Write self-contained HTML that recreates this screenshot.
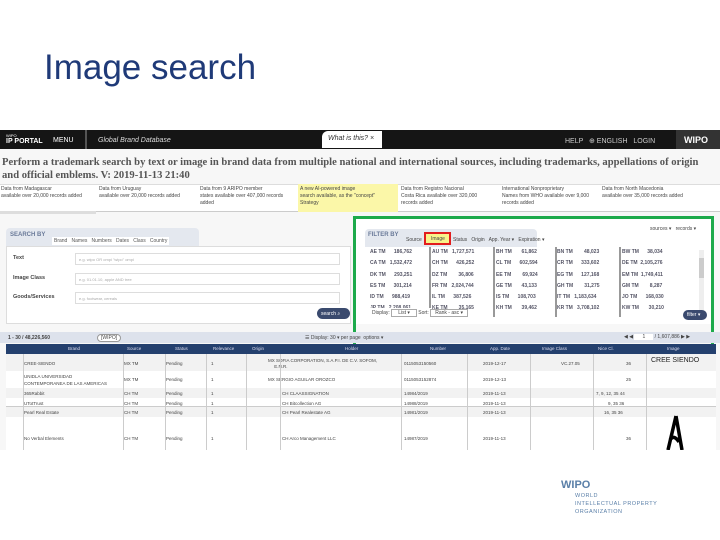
<!DOCTYPE html><html><head><style>
*{margin:0;padding:0;box-sizing:border-box}
body{width:720px;height:540px;background:#fff;position:relative;overflow:hidden;font-family:"Liberation Sans",sans-serif}
.a{position:absolute}
.t{font-size:5px;color:#444;white-space:nowrap}
</style></head><body>
<div class="a" style="left:44px;top:48px;font-size:35px;color:#1f3a78">Image search</div>

<!-- top bar -->
<div class="a" style="left:0;top:130px;width:720px;height:19px;background:#151515"></div>
<div class="a t" style="left:6px;top:133px;color:#fff;font-size:4px">WIPO</div>
<div class="a t" style="left:6px;top:138px;color:#fff;font-size:7px;font-weight:bold">IP PORTAL</div>
<div class="a t" style="left:53px;top:137px;color:#fff;font-size:7px">MENU</div>
<div class="a" style="left:85px;top:130px;width:2px;height:19px;background:#555"></div>
<div class="a t" style="left:98px;top:137px;color:#ddd;font-size:7px;font-style:italic">Global Brand Database</div>
<div class="a" style="left:322px;top:131px;width:60px;height:17px;background:#fff;border-radius:6px 0 0 0"></div>
<div class="a t" style="left:328px;top:135px;color:#333;font-size:7px;font-style:italic">What is this? ×</div>
<div class="a t" style="left:565px;top:137px;color:#ccc;font-size:7px">HELP &nbsp; ⊕ ENGLISH &nbsp; LOGIN</div>
<div class="a" style="left:676px;top:130px;width:44px;height:19px;background:#333"></div>
<div class="a t" style="left:684px;top:135px;color:#fff;font-size:9px;font-weight:bold">WIPO</div>

<div class="a" style="left:0;top:149px;width:720px;height:301px;background:#f7f7f7"></div>
<div class="a" style="left:2px;top:156px;font-family:'Liberation Serif',serif;font-size:10.6px;font-weight:bold;color:#555;line-height:13px;width:700px">Perform a trademark search by text or image in brand data from multiple national and international sources, including trademarks, appellations of origin and official emblems. V: 2019-11-13 21:40</div>

<!-- notices -->
<div class="a" style="left:0;top:184px;width:720px;height:28px;background:#fff;border-top:1px solid #ddd;border-bottom:1px solid #ccc"></div>
<div class="a" style="left:298px;top:184px;width:100px;height:28px;background:#fbf7a8"></div>
<div class="a t" style="left:1px;top:186px;line-height:7px">Data from Madagascar<br>available over 20,000 records added</div>
<div class="a t" style="left:99px;top:186px;line-height:7px">Data from Uruguay<br>available over 20,000 records added</div>
<div class="a t" style="left:200px;top:186px;line-height:7px">Data from 9 ARIPO member<br>states available over 407,000 records<br>added</div>
<div class="a t" style="left:300px;top:186px;line-height:7px">A new AI-powered image<br>search available, as the "concept"<br>Strategy</div>
<div class="a t" style="left:401px;top:186px;line-height:7px">Data from Registro Nacional<br>Costa Rica available over 320,000<br>records added</div>
<div class="a t" style="left:502px;top:186px;line-height:7px">International Nonproprietary<br>Names from WHO available over 9,000<br>records added</div>
<div class="a t" style="left:602px;top:186px;line-height:7px">Data from North Macedonia<br>available over 35,000 records added</div>
<div class="a" style="left:0;top:211px;width:96px;height:3px;background:#ddd"></div>

<!-- search by -->
<div class="a" style="left:6px;top:228px;width:193px;height:20px;background:#e4e8ef;border-radius:4px 4px 0 0"></div>
<div class="a t" style="left:10px;top:232px;font-size:6px;font-weight:bold;color:#6a7a99">SEARCH BY</div>
<div class="a t" style="left:52px;top:237px;font-size:5px;color:#555;background:#fff;padding:1px 2px">Brand&nbsp;&nbsp; Names&nbsp;&nbsp; Numbers&nbsp;&nbsp; Dates&nbsp;&nbsp; Class&nbsp;&nbsp; Country</div>
<div class="a" style="left:6px;top:246px;width:345px;height:78px;background:#fff;border:1px solid #ddd"></div>
<div class="a t" style="left:13px;top:255px;font-weight:bold;font-size:5.5px">Text</div>
<div class="a t" style="left:13px;top:275px;font-weight:bold;font-size:5.5px">Image Class</div>
<div class="a t" style="left:13px;top:294px;font-weight:bold;font-size:5.5px">Goods/Services</div>
<div class="a" style="left:75px;top:253px;width:265px;height:12px;border:1px solid #ddd;background:#fff"></div>
<div class="a" style="left:75px;top:273px;width:265px;height:12px;border:1px solid #ddd;background:#fff"></div>
<div class="a" style="left:75px;top:292px;width:265px;height:12px;border:1px solid #ddd;background:#fff"></div>
<div class="a t" style="left:79px;top:257px;color:#aaa;font-size:4px">e.g. wipo OR ompi "wipo" ompi</div>
<div class="a t" style="left:79px;top:277px;color:#aaa;font-size:4px">e.g. 01.01.10, apple AND tree</div>
<div class="a t" style="left:79px;top:296px;color:#aaa;font-size:4px">e.g. footwear, cereals</div>
<div class="a" style="left:317px;top:308px;width:33px;height:11px;background:#3a4a6e;border-radius:6px"></div>
<div class="a t" style="left:321px;top:311px;color:#fff">search ⌕</div>

<!-- filter by (green) -->
<div class="a" style="left:353px;top:216px;width:361px;height:191px;border:3px solid #1daa4b"></div>
<div class="a" style="left:356px;top:219px;width:355px;height:105px;background:#fff"></div>
<div class="a" style="left:365px;top:229px;width:172px;height:18px;background:#e4e8ef;border-radius:4px 4px 0 0"></div>
<div class="a t" style="left:368px;top:232px;font-size:6px;font-weight:bold;color:#6a7a99">FILTER BY</div>
<div class="a t" style="left:406px;top:237px">Source</div>
<div class="a" style="left:424px;top:232px;width:27px;height:13px;border:2px solid #e21d1d;background:#f8f38a"></div>
<div class="a t" style="left:431px;top:236px">Image</div>
<div class="a t" style="left:453px;top:237px">Status &nbsp; Origin &nbsp; App. Year ▾ &nbsp; Expiration ▾</div>
<div class="a t" style="left:650px;top:226px">sources ▾ &nbsp; records ▾</div>
<div class="a" style="left:370px;top:247px;width:330px;height:72px;font-size:5px;color:#556;line-height:11.3px;font-weight:bold;white-space:pre">
<div class="a" style="left:0;top:0;white-space:pre">AE TM      186,762
CA TM   1,532,472
DK TM      293,251
ES TM      301,214
ID TM      988,419
JP TM   2,208,061</div>
<div class="a" style="left:62px;top:0;white-space:pre">AU TM   1,727,571
CH TM      426,252
DZ TM        36,806
FR TM   2,024,744
IL TM      387,526
KE TM        35,165</div>
<div class="a" style="left:126px;top:0;white-space:pre">BH TM       61,862
CL TM      602,594
EE TM        69,924
GE TM       43,133
IS TM      108,703
KH TM       39,462</div>
<div class="a" style="left:187px;top:0;white-space:pre">BN TM        48,023
CR TM      333,602
EG TM      127,168
GH TM        31,275
IT TM   1,183,634
KR TM   3,708,102</div>
<div class="a" style="left:252px;top:0;white-space:pre">BW TM      38,034
DE TM  2,105,276
EM TM  1,749,411
GM TM        8,287
JO TM      168,030
KW TM       30,210</div>
</div>
<div class="a" style="left:429px;top:247px;width:2px;height:70px;background:#999"></div>
<div class="a" style="left:493px;top:247px;width:2px;height:70px;background:#999"></div>
<div class="a" style="left:555px;top:247px;width:2px;height:70px;background:#999"></div>
<div class="a" style="left:619px;top:247px;width:2px;height:70px;background:#999"></div>
<div class="a" style="left:699px;top:250px;width:5px;height:60px;background:#eee"></div>
<div class="a" style="left:699px;top:258px;width:5px;height:20px;background:#ccc"></div>
<div class="a" style="left:370px;top:308px;width:62px;height:11px;background:#fff"></div>
<div class="a t" style="left:372px;top:310px">Display: <span style="border:1px solid #aaa;padding:0 6px">List ▾</span> Sort: <span style="border:1px solid #aaa;padding:0 4px">Rank - asc ▾</span></div>
<div class="a" style="left:683px;top:310px;width:24px;height:10px;background:#3a4a6e;border-radius:5px"></div>
<div class="a t" style="left:687px;top:312px;color:#fff">filter ▾</div>

<!-- results -->
<div class="a" style="left:0;top:332px;width:720px;height:11px;background:#dde2ec"></div>
<div class="a t" style="left:8px;top:335px;font-weight:bold">1 - 30 / 48,226,560</div>
<div class="a t" style="left:97px;top:334px;border:1px solid #999;border-radius:4px;padding:0 3px;background:#fff">[WIPO]</div>
<div class="a t" style="left:305px;top:335px">☰ Display: 30 ▾ per page &nbsp;options ▾</div>
<div class="a t" style="left:624px;top:334px">◀ ◀ <span style="background:#fff;padding:0 8px">1</span> / 1,607,886 ▶ ▶</div>
<div class="a" style="left:6px;top:344px;width:710px;height:10px;background:#24406e"></div>
<div class="a t" style="left:0;top:346px;width:720px;color:#dde;font-size:4.5px">
<span class="a" style="left:68px">Brand</span><span class="a" style="left:127px">Source</span><span class="a" style="left:175px">Status</span><span class="a" style="left:213px">Relevance</span><span class="a" style="left:252px">Origin</span><span class="a" style="left:345px">Holder</span><span class="a" style="left:430px">Number</span><span class="a" style="left:490px">App. Date</span><span class="a" style="left:542px">Image Class</span><span class="a" style="left:598px">Nice Cl.</span><span class="a" style="left:667px">Image</span></div>
<div class="a" style="left:6px;top:354px;width:710px;height:96px;background:#fff"></div>
<div class="a" style="left:6px;top:354px;width:710px;height:17px;background:#f2f2f2"></div>
<div class="a" style="left:6px;top:388px;width:710px;height:10px;background:#f2f2f2"></div>
<div class="a" style="left:6px;top:406px;width:710px;height:11px;background:#f2f2f2;border-top:1px solid #ccc"></div>
<div class="a t" style="left:0;top:2px;width:720px;font-size:4.5px;color:#444">
<span class="a" style="left:24px;top:359px">CREE-SIENDO</span><span class="a" style="left:124px;top:359px">MX TM</span><span class="a" style="left:166px;top:359px">Pending</span><span class="a" style="left:211px;top:359px">1</span><span class="a" style="left:268px;top:356px;line-height:6px">MX SOFIA CORPORATION, S.A.P.I. DE C.V. SOFOM,<br>&nbsp;&nbsp;&nbsp;&nbsp; E.N.R.</span><span class="a" style="left:404px;top:359px">0115053150560</span><span class="a" style="left:483px;top:359px">2019-12-17</span><span class="a" style="left:561px;top:359px">VC.27.05</span><span class="a" style="left:626px;top:359px">36</span>
<span class="a" style="left:24px;top:371px;line-height:7px">UNIDLA UNIVERSIDAD<br>CONTEMPORANEA DE LAS AMERICAS</span><span class="a" style="left:124px;top:375px">MX TM</span><span class="a" style="left:166px;top:375px">Pending</span><span class="a" style="left:211px;top:375px">1</span><span class="a" style="left:268px;top:375px">MX SERGIO AGUILAR OROZCO</span><span class="a" style="left:404px;top:375px">0115053152874</span><span class="a" style="left:483px;top:375px">2019-12-13</span><span class="a" style="left:626px;top:375px">25</span>
<span class="a" style="left:24px;top:389px">365Rabbit</span><span class="a" style="left:124px;top:389px">CH TM</span><span class="a" style="left:166px;top:389px">Pending</span><span class="a" style="left:211px;top:389px">1</span><span class="a" style="left:282px;top:389px">CH CLAASSIGNATION</span><span class="a" style="left:404px;top:389px">14984/2019</span><span class="a" style="left:483px;top:389px">2019-11-13</span><span class="a" style="left:596px;top:389px">7, 9, 12, 35 44</span>
<span class="a" style="left:24px;top:399px">UTotTrust</span><span class="a" style="left:124px;top:399px">CH TM</span><span class="a" style="left:166px;top:399px">Pending</span><span class="a" style="left:211px;top:399px">1</span><span class="a" style="left:282px;top:399px">CH Bitcollection AG</span><span class="a" style="left:404px;top:399px">14988/2019</span><span class="a" style="left:483px;top:399px">2019-11-13</span><span class="a" style="left:608px;top:399px">9, 35 36</span>
<span class="a" style="left:24px;top:408px">Pearl Real Estate</span><span class="a" style="left:124px;top:408px">CH TM</span><span class="a" style="left:166px;top:408px">Pending</span><span class="a" style="left:211px;top:408px">1</span><span class="a" style="left:282px;top:408px">CH Pearl Realestate AG</span><span class="a" style="left:404px;top:408px">14981/2019</span><span class="a" style="left:483px;top:408px">2019-11-13</span><span class="a" style="left:604px;top:408px">16, 35 36</span>
<span class="a" style="left:24px;top:434px">No Verbal Elements</span><span class="a" style="left:124px;top:434px">CH TM</span><span class="a" style="left:166px;top:434px">Pending</span><span class="a" style="left:211px;top:434px">1</span><span class="a" style="left:282px;top:434px">CH Arco Management LLC</span><span class="a" style="left:404px;top:434px">14987/2019</span><span class="a" style="left:483px;top:434px">2019-11-13</span><span class="a" style="left:626px;top:434px">36</span>
</div>
<div class="a" style="left:651px;top:357px;font-size:7px;color:#222">CREE SIENDO</div>
<svg class="a" style="left:660px;top:414px" width="28" height="36"><path d="M16 2 L8 36 M16 2 L22 36 M10 26 Q14 20 19 28" stroke="#000" stroke-width="3.5" fill="none"/></svg>
<div class="a" style="left:6px;top:354px;width:710px;height:96px;pointer-events:none;
background:linear-gradient(#ccc,#ccc) 17px 0/1px 100% no-repeat,linear-gradient(#ccc,#ccc) 117px 0/1px 100% no-repeat,linear-gradient(#ccc,#ccc) 159px 0/1px 100% no-repeat,linear-gradient(#ccc,#ccc) 200px 0/1px 100% no-repeat,linear-gradient(#ccc,#ccc) 240px 0/1px 100% no-repeat,linear-gradient(#ccc,#ccc) 274px 0/1px 100% no-repeat,linear-gradient(#ccc,#ccc) 395px 0/1px 100% no-repeat,linear-gradient(#ccc,#ccc) 461px 0/1px 100% no-repeat,linear-gradient(#ccc,#ccc) 524px 0/1px 100% no-repeat,linear-gradient(#ccc,#ccc) 587px 0/1px 100% no-repeat,linear-gradient(#ccc,#ccc) 640px 0/1px 100% no-repeat"></div>

<!-- WIPO logo -->
<div class="a" style="left:561px;top:479px;font-size:11px;font-weight:bold;color:#5a7fa8">WIPO</div>
<div class="a" style="left:575px;top:492px;font-size:5.5px;color:#5a7fa8;line-height:8px;letter-spacing:.5px">WORLD<br>INTELLECTUAL PROPERTY<br>ORGANIZATION</div>
</body></html>
